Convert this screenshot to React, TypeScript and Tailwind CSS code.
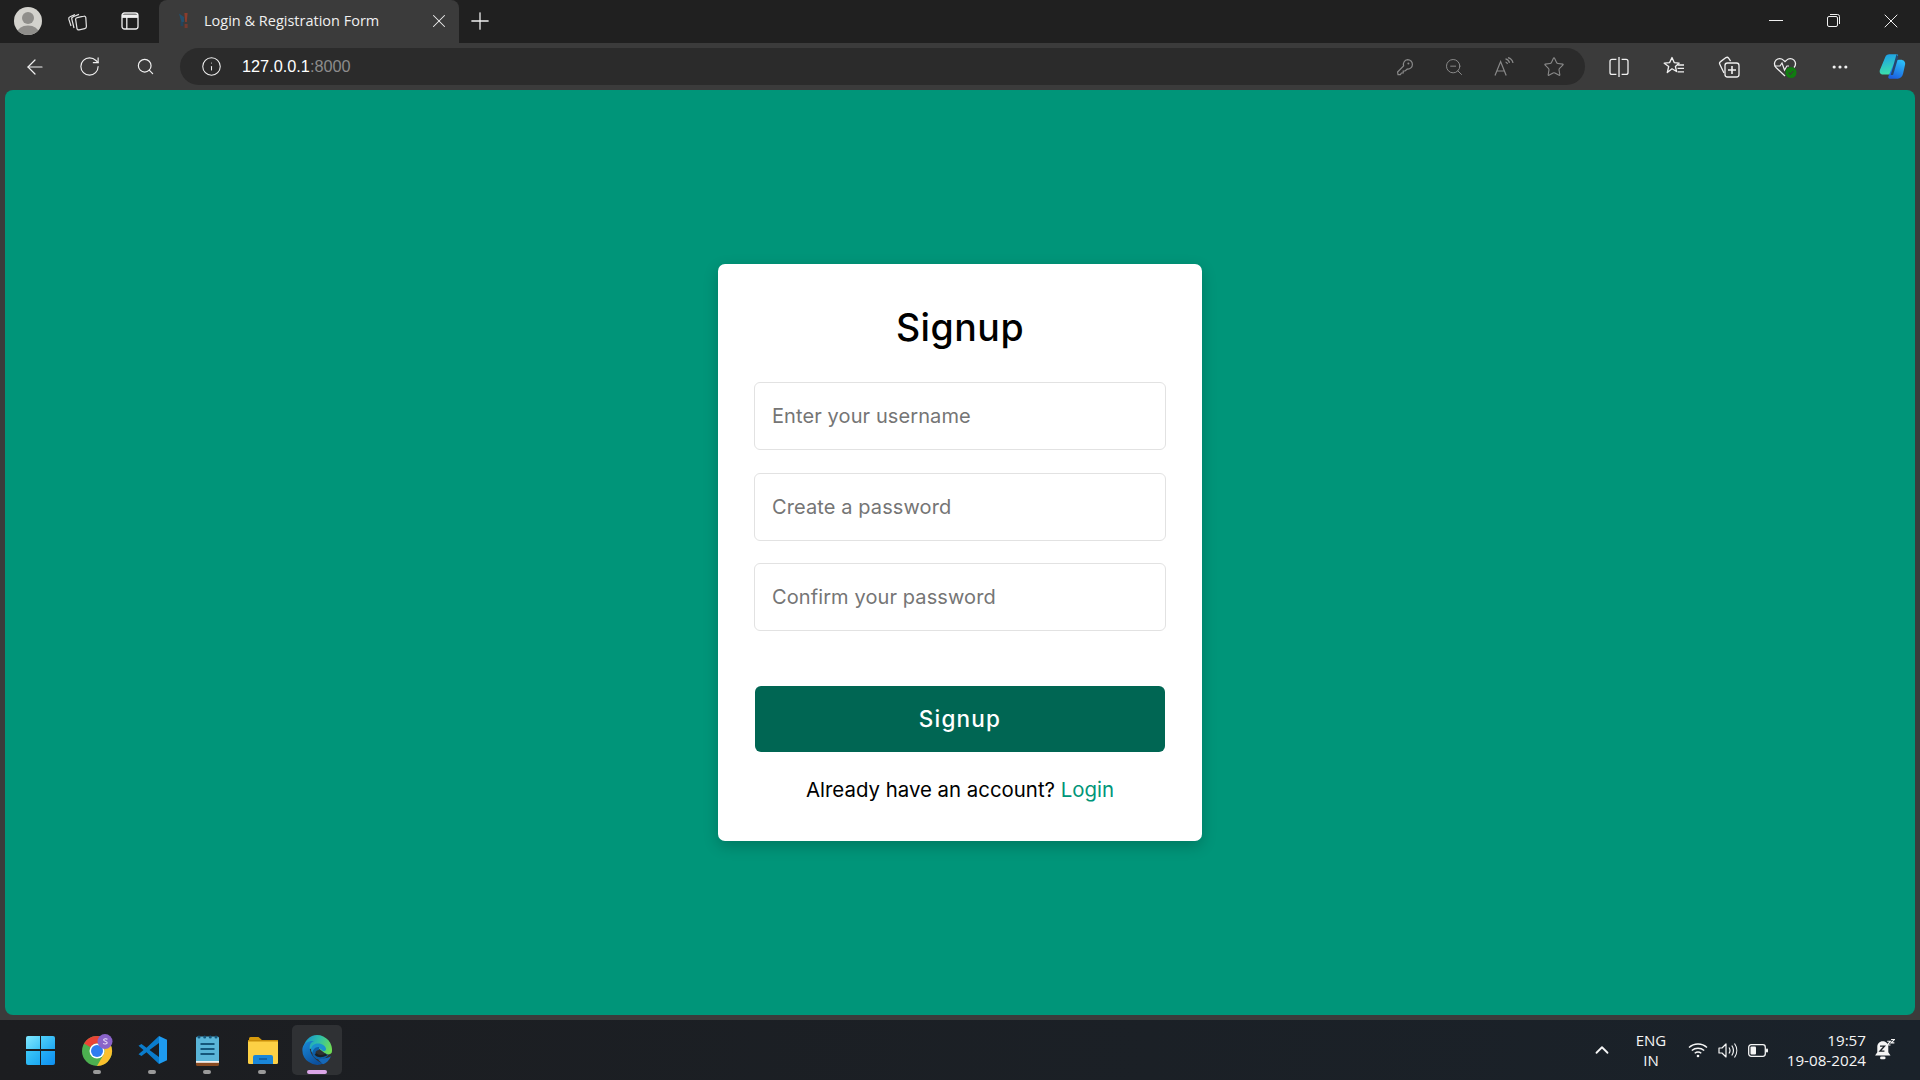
import React from 'react';
import { ArrowLeft, ChevronUp, Info, MoreHorizontal, Plus, RotateCw, Search, Star, X, ZoomOut } from 'lucide-react';

const uiFont = { fontFamily: '"Open Sans", "Noto Sans", sans-serif' };

const Avatar = () => (
  <svg width="28" height="28" viewBox="0 0 28 28">
    <defs>
      <clipPath id="av">
        <circle cx="14" cy="14" r="14" />
      </clipPath>
    </defs>
    <g clipPath="url(#av)">
      <rect width="28" height="28" fill="#d3d2cd" />
      <circle cx="14" cy="11" r="6" fill="#8f8e8b" />
      <ellipse cx="14" cy="26" rx="11" ry="7.5" fill="#8f8e8b" />
    </g>
  </svg>
);

const WorkspacesIcon = () => (
  <svg width="22" height="20" viewBox="0 0 22 20" fill="none" stroke="#e4e4e4" strokeWidth="1.2">
    <path d="M5 15 2.8 8.2a2 2 0 0 1 1.2-2.4L9 3.6" />
    <path d="M8 17 5.8 8.2a2 2 0 0 1 1.4-2.4L13 3.4" />
    <path d="M9.6 8.2a2 2 0 0 1 1.6-1.6l6.6-1.4a1.6 1.6 0 0 1 2 1.4l.6 9a2 2 0 0 1-1.6 2l-5.8 1.2a1.6 1.6 0 0 1-2-1.2Z" />
  </svg>
);

const VerticalTabsIcon = () => (
  <svg width="18" height="18" viewBox="0 0 18 18" fill="none" stroke="#f0f0f0" strokeWidth="1.3">
    <rect x="1" y="1" width="16" height="16" rx="2.5" />
    <path d="M1 4.2h16" strokeWidth="3.4" />
    <path d="M5.8 5v12" />
  </svg>
);

const Favicon = () => (
  <svg width="16" height="18" viewBox="0 0 16 18">
    <path d="M1 1.5 6 5v5H3.4Z" fill="#24506e" />
    <path d="M6.4 1h3.2L8.8 10H7.2Z" fill="#8a3d2d" />
    <rect x="6.6" y="12" width="3" height="4" fill="#743a30" />
    <rect x="2.6" y="10" width="2.6" height="4" fill="#24445c" />
  </svg>
);

const RestoreIcon = () => (
  <svg width="13" height="13" viewBox="0 0 13 13" fill="none" stroke="#f0f0f0" strokeWidth="1">
    <rect x="0.5" y="2.5" width="10" height="10" rx="1.5" />
    <path d="M3 .5h7.5a2 2 0 0 1 2 2V10" />
  </svg>
);

const KeyIcon = () => (
  <svg width="18" height="18" viewBox="0 0 18 18" fill="none" stroke="#8a8a8a" strokeWidth="1.2">
    <path d="M11.6 1.6a4.8 4.8 0 0 1 4.8 4.8c0 2.8-2.4 4.9-5 4.6L9 13H7.2v2H5.4l-1 1.6H2L1.6 14l6-6.2a4.8 4.8 0 0 1 4-6.2Z" />
    <circle cx="12.4" cy="5.6" r="1" fill="#8a8a8a" stroke="none" />
  </svg>
);

const ReadAloudIcon = () => (
  <svg width="20" height="20" viewBox="0 0 20 20" fill="none" stroke="#8a8a8a" strokeWidth="1.2">
    <path d="M1 18.5 6.6 4.5l5.6 14M3 14h7.2" />
    <path d="M11.5 1.8c2 .4 3.6 2 4 4M11.5 5c1 .2 1.7 1 2 2" />
    <path d="M14 .6c2.8.8 4.6 3 5 5.4" />
  </svg>
);

const SplitIcon = () => (
  <svg width="20" height="22" viewBox="0 0 20 22" fill="none" stroke="#f0f0f0" strokeWidth="1.3">
    <path d="M10 1v20" />
    <path d="M7.4 3.4H3a2 2 0 0 0-2 2v11a2 2 0 0 0 2 2h4.4" />
    <path d="M12.6 3.4H17a2 2 0 0 1 2 2v11a2 2 0 0 1-2 2h-4.4" />
  </svg>
);

const FavoritesIcon = () => (
  <svg width="22" height="21" viewBox="0 0 22 21" fill="none" stroke="#f0f0f0" strokeWidth="1.3">
    <path d="M9 1.5 11.2 6.6l5 .5-3.8 3.4 1.2 5-4.6-2.7-4.7 3.7 1.4-6L1.2 7.2l5.4-.6Z" strokeLinejoin="round" />
    <path d="M14.6 9h6.4M14.6 12.4h6.4M14.6 15.8h6.4" />
  </svg>
);

const CollectionsIcon = () => (
  <svg width="22" height="22" viewBox="0 0 22 22" fill="none" stroke="#f0f0f0" strokeWidth="1.3">
    <path d="M6 17 1.8 8.2a2 2 0 0 1 .8-2.6L8 1.6a2 2 0 0 1 2.6.6l2 3" />
    <rect x="7" y="7" width="14" height="14" rx="2.5" />
    <path d="M14 10v8M10 14h8" strokeWidth="1.6" />
  </svg>
);

const HealthIcon = () => (
  <svg width="24" height="22" viewBox="0 0 24 22" fill="none">
    <path d="M12 20 3 11.5a5.2 5.2 0 0 1 7.4-7.4L12 5.6l1.600-1.500a5.200 5.200 0 0 1 7.400 7.400" stroke="#f0f0f0" strokeWidth="1.3" />
    <path d="M1.500 10H7l2-3 2.500 7 2.400-4H16" stroke="#f0f0f0" strokeWidth="1.2" />
    <circle cx="18" cy="16.500" r="5.500" fill="#107c10" />
    <path d="m15.600 16.700 1.700 1.700 3.100-3.400" stroke="#3b3b3b" strokeWidth="1.1" />
  </svg>
);

const CopilotIcon = () => (
  <svg width="27" height="27" viewBox="0 0 30 29">
    <defs>
      <linearGradient id="cpa" x1="0.3" y1="0" x2="0.5" y2="1">
        <stop offset="0" stopColor="#1d9fe8" />
        <stop offset="1" stopColor="#3de3a8" />
      </linearGradient>
      <linearGradient id="cpb" x1="0.7" y1="0" x2="0.3" y2="1">
        <stop offset="0" stopColor="#2cc0f8" />
        <stop offset="1" stopColor="#1b5fe0" />
      </linearGradient>
    </defs>
    <path d="M11.500 1h8c1.600 0 2 .8 1.600 2l-6 20.500H4.200C1.400 23.500.2 21 1 18.500L7 4c.8-2 2.400-3 4.500-3Z" fill="url(#cpa)" />
    <path d="M22 7h2c3.600 0 5.600 2.400 5 5.400l-2.200 10c-.8 3.600-3.200 5.600-6 5.600H12c-1.400 0-2-1-1.600-2.400L16.800 10c.6-2 2.800-3 5.200-3Z" fill="url(#cpb)" />
    <path d="M19.500 1 13 24h2.600l6-20Z" fill="#26456e" />
  </svg>
);

const WindowsLogo = () => (
  <div className="grid grid-cols-2 gap-[1.5px] w-[29px] h-[29px]">
    <div className="rounded-tl-[2px] bg-gradient-to-br from-[#7fe8ff] to-[#3cc4f7]" />
    <div className="rounded-tr-[2px] bg-gradient-to-br from-[#4fd0fa] to-[#1da8f2]" />
    <div className="rounded-bl-[2px] bg-gradient-to-br from-[#3cc8f8] to-[#1aa6f0]" />
    <div className="rounded-br-[2px] bg-gradient-to-br from-[#26b0f6] to-[#0f8ff0]" />
  </div>
);

const ChromeIcon = () => (
  <svg width="32" height="32" viewBox="0 0 32 32">
    <circle cx="15" cy="17" r="15" fill="#4caf50" />
    <path d="M15 2a15 15 0 0 1 13 7.500H15a7.500 7.500 0 0 0-6.500 3.800L2 9.500A15 15 0 0 1 15 2Z" fill="#ea4335" />
    <path d="M28 9.500a15 15 0 0 1-13 22.500l6.500-11.300A7.500 7.500 0 0 0 21.500 13Z" fill="#fbc02d" />
    <circle cx="15" cy="17" r="7.500" fill="#fff" />
    <circle cx="15" cy="17" r="6" fill="#2f7cf0" />
    <circle cx="23" cy="7.500" r="7.500" fill="#8a63c9" />
    <path d="M25.400 5.300c-.6-.8-3.600-1-3.800.6-.2 1.600 3.800 1.200 3.600 3-.2 1.400-3.200 1.400-4 .3" stroke="#e8def8" strokeWidth="1.100" fill="none" />
  </svg>
);

const VsCodeIcon = () => (
  <svg width="30" height="30" viewBox="0 0 30 30">
    <path d="M21 1 8.500 12.800 3.500 9 .5 10.800 5.500 15l-5 4.200 3 1.800 5-3.800L21 29v-7L11.500 15 21 8Z" fill="#0a7ccc" />
    <path d="M21 1 29 4.800v20.400L21 29Z" fill="#1e9bf0" />
  </svg>
);

const NotepadIcon = () => (
  <svg width="24" height="31" viewBox="0 0 24 31">
    <rect x="0" y="1.500" width="23" height="28" rx="1.500" fill="#5ab5d8" />
    <path d="M0 27h23v2.500a1.500 1.500 0 0 1-1.500 1.500h-20A1.500 1.500 0 0 1 0 29.500Z" fill="#8a4b21" />
    <rect x="0" y="26" width="23" height="1.800" fill="#f0f0f0" />
    <circle cx="3" cy="2" r="1.500" fill="#15567a" />
    <circle cx="8.700" cy="2" r="1.500" fill="#15567a" />
    <circle cx="14.300" cy="2" r="1.500" fill="#15567a" />
    <circle cx="20" cy="2" r="1.500" fill="#15567a" />
    <path d="M4.500 9h14M4.500 14h14M4.500 19h14" stroke="#15567a" strokeWidth="2" />
  </svg>
);

const FolderIcon = () => (
  <svg width="30" height="27" viewBox="0 0 30 27">
    <path d="M1 1.500A1.500 1.500 0 0 1 2.500 0h8l4 3.500H1Z" fill="#d69a0c" />
    <path d="M0 4h30v21.500a1.500 1.500 0 0 1-1.500 1.500h-27A1.500 1.500 0 0 1 0 25.500Z" fill="#fdd045" />
    <rect x="0" y="3" width="30" height="1.500" fill="#c98d0a" />
    <path d="M5 20a2 2 0 0 1 2-2h16a2 2 0 0 1 2 2v7H5Z" fill="#1a86d8" />
    <path d="M11 22h8" stroke="#0d4e8c" strokeWidth="1.200" />
  </svg>
);

const EdgeIcon = () => (
  <svg width="30" height="30" viewBox="0 0 30 30">
    <defs>
      <linearGradient id="eda" x1="0" y1="0.300" x2="1" y2="0.600">
        <stop offset="0" stopColor="#1690d0" />
        <stop offset="0.500" stopColor="#2fc0a8" />
        <stop offset="1" stopColor="#6fdc54" />
      </linearGradient>
      <linearGradient id="edb" x1="0" y1="0" x2="0.600" y2="1">
        <stop offset="0" stopColor="#1a8ad8" />
        <stop offset="1" stopColor="#0c4f9c" />
      </linearGradient>
    </defs>
    <path d="M15 0a15 15 0 0 1 14.800 17.500c-1 2-4 2.500-5.800 1.500l-8-6-9 1L1 14C2 6 8 0 15 0Z" fill="url(#eda)" />
    <path d="M0.500 13C2 7.500 7 5.500 12 6c-4 1.500-5 5-4 9 1.200 6 6 11 13.500 13.500A15 15 0 0 1 0.500 13Z" fill="url(#edb)" />
    <path d="M9 15c0-4 3-6.500 7-6.500s8 2.500 8 5.500c0 1.500-1 2-2 2-2 0-2-2-5-2.500-4-.5-6 2-6 5-1-1-2-2-2-3.500Z" fill="#1a8fcf" />
    <path d="M17 13.500C12.500 13.500 10.500 18 13 21c3 3.300 8.500 2.500 12-1.500" fill="none" stroke="#0d5ea8" strokeWidth="3" />
    <path d="M13.500 19c2 2.500 6.500 2.700 11 .5" fill="none" stroke="#1b2024" strokeWidth="2.400" />
    <path d="M21 29.200c3-1 6.500-4 8-8-1 .8-4 1.800-6.500 2L16 24.500Z" fill="#1668b8" />
  </svg>
);

const WifiIcon = () => (
  <svg width="20" height="16" viewBox="0 0 20 16" fill="none" stroke="#f5f5f5" strokeWidth="1.400">
    <path d="M1 5.500c5-4.700 13-4.700 18 0M3.800 8.500c3.500-3 8.900-3 12.400 0M6.700 11.300c1.900-1.500 4.700-1.500 6.600 0" />
    <circle cx="10" cy="14" r="1.300" fill="#f5f5f5" stroke="none" />
  </svg>
);

const SpeakerIcon = () => (
  <svg width="20" height="17" viewBox="0 0 20 17" fill="none" stroke="#f5f5f5" strokeWidth="1.200">
    <path d="M1 6h3l4-4v13l-4-4H1Z" strokeLinejoin="round" />
    <path d="M11 5.500c1.200 1.800 1.200 4.200 0 6M13.800 3.500c2 3 2 7 0 10M16.500 1.500c3 4.200 3 9.800 0 14" />
  </svg>
);

const BatteryIcon = () => (
  <svg width="20" height="13" viewBox="0 0 20 13" fill="none">
    <rect x="0.700" y="0.700" width="16.600" height="11.600" rx="2.500" stroke="#f5f5f5" strokeWidth="1.300" />
    <rect x="2.500" y="2.500" width="5.500" height="8" rx="1" fill="#f5f5f5" />
    <rect x="18" y="4.500" width="2" height="4" rx="1" fill="#f5f5f5" />
  </svg>
);

const BellIcon = () => (
  <svg width="20" height="22" viewBox="0 0 18 20">
    <path d="M7 2c3 0 5 2.500 5 5v5l2 3H0l2-3V7c0-2.500 2-5 5-5Z" fill="#f5f5f5" />
    <rect x="4.500" y="16" width="5" height="2.500" rx="1.200" fill="#f5f5f5" />
    <path d="M4.500 6.500h4l-4 4.500h4" stroke="#1b2026" strokeWidth="1.300" fill="none" />
    <path d="M11 2h3l-3 3.500h3M14.500 .5h3l-3 3h3" stroke="#f5f5f5" strokeWidth="1" fill="none" />
  </svg>
);

const TabStrip = () => (
  <div className="flex items-start h-[43px] bg-[#202020] text-[#f0f0f0]">
    <div className="ml-[14px] w-[28px] h-[41px] flex items-center">
      <Avatar />
    </div>
    <div className="ml-[24px] w-[22px] h-[41px] flex items-center">
      <WorkspacesIcon />
    </div>
    <div className="ml-[33px] w-[18px] h-[41px] flex items-center">
      <VerticalTabsIcon />
    </div>
    <div className="ml-[20px] w-[300px] h-[43px] pl-[19px] pr-[9px] pb-[2px] flex items-center bg-[#3b3b3b] rounded-t-[8px]">
      <Favicon />
      <span className="ml-[10px] flex-1 text-[14.5px] whitespace-nowrap">Login &amp; Registration Form</span>
      <X size={22} strokeWidth={1.1} />
    </div>
    <div className="ml-[7px] h-[41px] flex items-center">
      <Plus size={28} strokeWidth={1.1} />
    </div>
    <div className="ml-auto h-[41px] flex items-center pr-[17px]">
      <div className="w-[14px] h-[1px] bg-[#f0f0f0]" />
      <div className="ml-[44px]">
        <RestoreIcon />
      </div>
      <div className="ml-[39px]">
        <X size={24} strokeWidth={1} />
      </div>
    </div>
  </div>
);

const Toolbar = () => (
  <div className="flex items-center h-[47px] bg-[#3b3b3b] text-[#f0f0f0]">
    <div className="ml-[23px] w-[24px]">
      <ArrowLeft size={24} strokeWidth={1.2} />
    </div>
    <div className="ml-[31px] w-[24px]">
      <RotateCw size={23} strokeWidth={1.2} />
    </div>
    <div className="ml-[34px] w-[20px]">
      <Search size={19} strokeWidth={1.5} />
    </div>
    <div className="ml-[24px] w-[1405px] h-[37px] rounded-full bg-[#2b2b2b] flex items-center">
      <div className="ml-[21px]">
        <Info size={21} strokeWidth={1.2} />
      </div>
      <span className="ml-[20px] text-[16.3px] text-white" style={{ fontFamily: '"Liberation Sans", sans-serif' }}>
        127.0.0.1<span className="text-[#8c8c8c]">:8000</span>
      </span>
      <div className="ml-auto flex items-center text-[#8a8a8a]">
        <KeyIcon />
        <ZoomOut size={20} strokeWidth={1.2} className="ml-[30px]" />
        <div className="ml-[30px]">
          <ReadAloudIcon />
        </div>
        <Star size={22} strokeWidth={1.2} className="ml-[29px] mr-[20px]" />
      </div>
    </div>
    <div className="ml-[24px]">
      <SplitIcon />
    </div>
    <div className="ml-[34px]">
      <FavoritesIcon />
    </div>
    <div className="ml-[33px]">
      <CollectionsIcon />
    </div>
    <div className="ml-[33px]">
      <HealthIcon />
    </div>
    <MoreHorizontal size={20} strokeWidth={1.8} className="ml-[33px]" />
    <div className="ml-[29px]">
      <CopilotIcon />
    </div>
  </div>
);

const SignupCard = () => (
  <form
    className="w-[484px] h-[577px] bg-white rounded-[7px] px-[36px] pt-[37px] shadow-[0_5px_15px_rgba(0,0,0,0.2)]"
    style={{ fontFamily: 'Inter, "Open Sans", sans-serif' }}
  >
    <h1 className="text-[37.5px] leading-[54px] font-medium text-center text-black mb-[27px] tracking-[0.5px]">Signup</h1>
    <div className="flex flex-col gap-[22.5px]">
      <input
        type="text"
        placeholder="Enter your username"
        className="w-full h-[68px] px-[17px] border border-[#e2e2e2] rounded-[6px] text-[20px] tracking-[0.1px] outline-none placeholder:text-[#757575]"
      />
      <input
        type="password"
        placeholder="Create a password"
        className="w-full h-[68px] px-[17px] border border-[#e2e2e2] rounded-[6px] text-[20px] tracking-[0.1px] outline-none placeholder:text-[#757575]"
      />
      <input
        type="password"
        placeholder="Confirm your password"
        className="w-full h-[68px] px-[17px] border border-[#e2e2e2] rounded-[6px] text-[20px] tracking-[0.1px] outline-none placeholder:text-[#757575]"
      />
    </div>
    <button
      type="button"
      className="block w-[410px] ml-[1px] h-[66px] mt-[55px] bg-[#006653] text-white text-[22.5px] font-medium tracking-[1.2px] rounded-[6px]"
    >
      Signup
    </button>
    <p className="mt-[24px] text-[20.4px] leading-[28px] text-center text-black">
      Already have an account? <a href="#" className="text-[#009579]">Login</a>
    </p>
  </form>
);

const Taskbar = () => (
  <div className="flex items-center h-[60px] bg-gradient-to-r from-[#1c1d20] to-[#1a222a] text-[#f5f5f5]">
    <div className="ml-[26px] w-[29px]">
      <WindowsLogo />
    </div>
    <div className="ml-[15px] flex items-center">
      <div className="relative w-[55px] h-[50px] flex items-center justify-center">
        <ChromeIcon />
        <div className="absolute bottom-[1px] left-[23px] w-[8px] h-[4px] rounded-full bg-[#9a9a9a]" />
      </div>
      <div className="relative w-[55px] h-[50px] flex items-center justify-center">
        <VsCodeIcon />
        <div className="absolute bottom-[1px] left-[23px] w-[8px] h-[4px] rounded-full bg-[#9a9a9a]" />
      </div>
      <div className="relative w-[55px] h-[50px] flex items-center justify-center">
        <NotepadIcon />
        <div className="absolute bottom-[1px] left-[23px] w-[8px] h-[4px] rounded-full bg-[#9a9a9a]" />
      </div>
      <div className="relative w-[55px] h-[50px] flex items-center justify-center">
        <FolderIcon />
        <div className="absolute bottom-[1px] left-[23px] w-[8px] h-[4px] rounded-full bg-[#9a9a9a]" />
      </div>
      <div className="relative w-[50px] h-[50px] ml-[2px] rounded-[5px] bg-[#2f3134] flex items-center justify-center">
        <EdgeIcon />
        <div className="absolute bottom-[1px] left-[15px] w-[20px] h-[4px] rounded-full bg-[#dba6e8]" />
      </div>
    </div>
    <div className="ml-auto flex items-center">
      <ChevronUp size={22} strokeWidth={2} />
      <div className="ml-[18px] w-[40px] text-center text-[15px] leading-[20px]">
        ENG
        <br />
        IN
      </div>
      <div className="ml-[17px]">
        <WifiIcon />
      </div>
      <div className="ml-[10px]">
        <SpeakerIcon />
      </div>
      <div className="ml-[10px]">
        <BatteryIcon />
      </div>
      <div className="ml-[18px] w-[80px] text-right text-[15.2px] leading-[20px] whitespace-nowrap">
        19:57
        <br />
        19-08-2024
      </div>
      <div className="ml-[9px] mr-[25px]">
        <BellIcon />
      </div>
    </div>
  </div>
);

export default function App() {
  return (
    <div className="w-[1920px] h-[1080px] flex flex-col overflow-hidden bg-[#3b3b3b]" style={uiFont}>
      <TabStrip />
      <Toolbar />
      <div className="h-[930px] px-[5px] pb-[5px]">
        <main className="h-full rounded-[8px] bg-[#009579] flex items-center justify-center">
          <SignupCard />
        </main>
      </div>
      <Taskbar />
    </div>
  );
}
